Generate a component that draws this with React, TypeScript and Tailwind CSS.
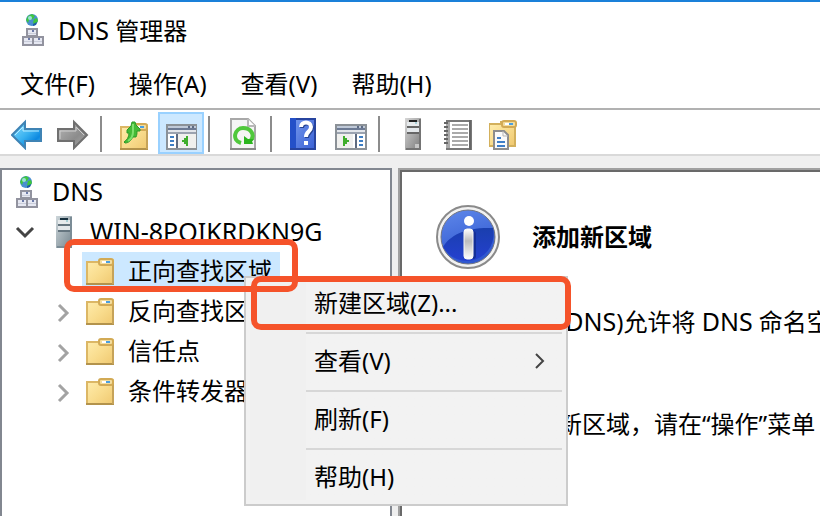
import type { ReactNode } from "react";

function Gradients() {
  return (
    <svg className="absolute h-0 w-0" aria-hidden="true">
      <defs>
        <linearGradient id="folder" x1="0" y1="0" x2="1" y2="1">
          <stop offset="0" stopColor="#ffeeb0" />
          <stop offset="0.5" stopColor="#f9dd8f" />
          <stop offset="1" stopColor="#efc76e" />
        </linearGradient>
        <linearGradient id="blueArrow" x1="0" y1="0" x2="1" y2="1">
          <stop offset="0" stopColor="#8fe0ff" />
          <stop offset="0.5" stopColor="#38b1f0" />
          <stop offset="0.75" stopColor="#0b88e0" />
          <stop offset="1" stopColor="#5ac8f8" />
        </linearGradient>
        <linearGradient id="grayArrow" x1="0" y1="0" x2="1" y2="1">
          <stop offset="0" stopColor="#b8b8b8" />
          <stop offset="0.6" stopColor="#8c8c8c" />
          <stop offset="1" stopColor="#a8a8a8" />
        </linearGradient>
        <linearGradient id="tower" x1="0" y1="0" x2="1" y2="1">
          <stop offset="0" stopColor="#d6d6d6" />
          <stop offset="1" stopColor="#7c7c7c" />
        </linearGradient>
        <linearGradient id="blueTower" x1="0" y1="0" x2="1" y2="1">
          <stop offset="0" stopColor="#cdd6da" />
          <stop offset="1" stopColor="#75858e" />
        </linearGradient>
        <linearGradient id="help" x1="0" y1="0" x2="1" y2="1">
          <stop offset="0" stopColor="#6f93ea" />
          <stop offset="1" stopColor="#3c63d6" />
        </linearGradient>
        <linearGradient id="infoTop" x1="0" y1="0" x2="0.3" y2="1">
          <stop offset="0" stopColor="#5f88ea" />
          <stop offset="1" stopColor="#2f57cf" />
        </linearGradient>
        <linearGradient id="infoBottom" x1="0" y1="0" x2="0" y2="1">
          <stop offset="0" stopColor="#1a3fae" />
          <stop offset="1" stopColor="#2440d0" />
        </linearGradient>
        <linearGradient id="infoStem" x1="0" y1="0" x2="0" y2="1">
          <stop offset="0" stopColor="#ffffff" />
          <stop offset="0.4" stopColor="#bdbdbd" />
          <stop offset="1" stopColor="#ffffff" />
        </linearGradient>
      </defs>
    </svg>
  );
}

function Icon({ children }: { children: ReactNode }) {
  return (
    <svg viewBox="0 0 32 32" className="block h-8 w-8 shrink-0" aria-hidden="true">
      {children}
    </svg>
  );
}

function DnsIcon() {
  return (
    <Icon>
      <circle cx="16" cy="6" r="6" fill="#4a8fd0" />
      <path d="M12 2l4-2 3 2-2 3-4 1-1 3-2-3zM18 5l3-1 1 3-3 4-2-2z" fill="#3fc63f" />
      <circle cx="14" cy="4" r="2" fill="#9be0d8" />
      <path d="M17 10l4-2-1 3-3 1z" fill="#1d5aa8" />
      {[[10, 14, 12, 9], [6, 22, 12, 10], [16, 22, 12, 10]].map(([x, y, w, h]) => (
        <g key={`${x}-${y}`}>
          <rect x={x + 1} y={y + 1} width={w - 2} height={h - 2} fill="#e6e8f2" stroke="#92939f" strokeWidth="2" />
          <rect x={x + 6} y={y + 2} width="2" height="2" fill="#6b7aa8" />
          <rect x={x + 2} y={y + 5} width={w - 4} height="1" fill="#c9cdda" />
        </g>
      ))}
    </Icon>
  );
}

function FolderShape() {
  return (
    <>
      <path d="M0 6h12l2-2h14v26H0z" fill="url(#folder)" />
      <path d="M1 29V7h12" fill="none" stroke="#dcb765" strokeWidth="2" />
      <path d="M0 29h28" stroke="#b3934c" strokeWidth="2" />
      <path d="M27 7v22" stroke="#c6a359" strokeWidth="2" />
      <rect x="13" y="4" width="14" height="6" rx="2" fill="#f3dc9d" stroke="#d2aa55" strokeWidth="2" />
      <rect x="16" y="6" width="4" height="2" fill="#fff" />
      <rect x="20" y="6" width="4" height="2" fill="#4a9fe0" />
    </>
  );
}

function FolderIcon() {
  return (
    <Icon>
      <g transform="translate(0 -1)">
        <FolderShape />
      </g>
    </Icon>
  );
}

function TowerIcon({ blue = false }: { blue?: boolean }) {
  return (
    <Icon>
      <rect x="8" y="0" width="16" height="32" fill={blue ? "url(#blueTower)" : "url(#tower)"} />
      <path d="M23 1v30H9" fill="none" stroke={blue ? "#7b8c96" : "#747474"} strokeWidth="2" />
      <rect x="12" y="2" width="8" height="2" fill={blue ? "#17303e" : "#222"} />
      <rect x="10" y="4" width="12" height="4" fill="#e6eaec" />
      <rect x="18" y="4" width="2" height="2" fill="#a9cfd6" />
      <rect x="10" y="8" width="12" height="2" fill={blue ? "#65757f" : "#666"} />
      <rect x="10" y="10" width="12" height="4" fill="#e3e7ea" />
      <rect x="10" y="14" width="12" height="2" fill={blue ? "#65757f" : "#666"} />
      {!blue && <rect x="18" y="26" width="4" height="4" fill="#c6c6c6" />}
    </Icon>
  );
}

function BackIcon() {
  return (
    <Icon>
      <path d="M1 17L14 4v7h16v12H14v7z" fill="url(#blueArrow)" stroke="#3f83b4" strokeWidth="2" />
      <path d="M4 17l8-8v4h16" fill="none" stroke="#b9ecff" strokeWidth="1" />
    </Icon>
  );
}

function ForwardIcon() {
  return (
    <Icon>
      <path d="M30 17L17 4v7H1v12h16v7z" fill="url(#grayArrow)" stroke="#707070" strokeWidth="2" />
      <path d="M3 21v-8h16V9l8 8" fill="none" stroke="#cfcfcf" strokeWidth="1" />
    </Icon>
  );
}

function FolderUpIcon() {
  return (
    <Icon>
      <g transform="translate(1 2)">
        <FolderShape />
        <path d="M4 22c3-2 5-5 5-9H7v-3l4-4 1-4h3l1 3 4 4v2h-3c0 2 0 4-1 6h-3c-2 3-4 6-8 6z" fill="#43bb36" stroke="#2d9a28" strokeWidth="1" />
        <path d="M13 4v8c0 3-2 7-5 9" fill="none" stroke="#7ee06c" strokeWidth="2" />
      </g>
    </Icon>
  );
}

function PaneIcon({ mirrored = false }: { mirrored?: boolean }) {
  return (
    <Icon>
      <g transform={mirrored ? undefined : "translate(1 0)"}>
        <rect x="1" y="7" width="30" height="24" fill="#fff" stroke="#8b9197" strokeWidth="2" />
        <rect x="2" y="8" width="28" height="2" fill="#bfc9d8" />
        <rect x="22" y="8" width="2" height="2" fill="#5d6b85" />
        <rect x="26" y="8" width="2" height="2" fill="#5d6b85" />
        <rect x="2" y="10" width="28" height="2" fill="#6c7a94" />
        <rect x="2" y="12" width="28" height="2" fill="#e3e6eb" />
        <rect x="2" y="14" width="28" height="2" fill="#9ba3b0" />
        {mirrored ? (
          <>
            <rect x="2" y="16" width="16" height="14" fill="#f0f0ee" />
            <rect x="20" y="16" width="2" height="14" fill="#5f6b80" />
            <path d="M8 18h2v2h2v2h2v2h-2v2h-2v2H8z" fill="#3fae2c" />
            <path d="M24 19h4M24 23h4M24 27h4" stroke="#3f7fc4" strokeWidth="2" />
          </>
        ) : (
          <>
            <rect x="12" y="16" width="18" height="14" fill="#f0f0ee" />
            <rect x="10" y="16" width="2" height="14" fill="#5f6b80" />
            <path d="M22 18h-2v2h-2v2h-2v2h2v2h2v2h2z" fill="#3fae2c" />
            <path d="M4 19h4M4 23h4M4 27h4" stroke="#3f7fc4" strokeWidth="2" />
          </>
        )}
      </g>
    </Icon>
  );
}

function RefreshIcon() {
  return (
    <Icon>
      <path d="M4 1h17l7 7v23H4z" fill="#f5f5f5" stroke="#a8a8a8" strokeWidth="2" />
      <path d="M21 1v7h7" fill="#fff" stroke="#b8b8b8" strokeWidth="2" />
      <path d="M3 31h26" stroke="#888" strokeWidth="2" />
      <path d="M14 25C4 22 8 10 16 10s12 7 8 12" fill="none" stroke="#50c83c" strokeWidth="4" />
      <path d="M17 26v-8l4 3h6l-2 2 1 3z" fill="#2cb51f" />
    </Icon>
  );
}

function HelpIcon() {
  return (
    <Icon>
      <rect x="1" y="0" width="26" height="32" fill="#27449f" />
      <rect x="1" y="0" width="6" height="30" fill="#2450c8" />
      <rect x="7" y="2" width="18" height="28" fill="url(#help)" />
      <path d="M13 10c0-6 10-6 10 0 0 5-5 4-5 10" fill="none" stroke="#254292" strokeWidth="4" />
      <path d="M12 9c0-6 10-6 10 0 0 5-5 4-5 10" fill="none" stroke="#fff" strokeWidth="4" />
      <rect x="15" y="23" width="4" height="4" fill="#fff" />
    </Icon>
  );
}

function NotebookIcon() {
  return (
    <Icon>
      <g transform="translate(-1 0)">
        <rect x="5" y="3" width="24" height="28" fill="#fff" stroke="#787878" strokeWidth="2" />
        <rect x="4" y="4" width="4" height="26" fill="#a9a9a9" />
        <path d="M28 2v30" stroke="#666" strokeWidth="2" />
        <path d="M10 7h16M10 11h16M10 15h16M10 19h16M10 23h16M10 27h16" stroke="#aaa" strokeWidth="2" />
        <path d="M2 5h4M2 9h4M2 13h4M2 17h4M2 21h4M2 25h4" stroke="#666" strokeWidth="2" />
      </g>
    </Icon>
  );
}

function FolderDocIcon() {
  return (
    <Icon>
      <path d="M0 6h12V4h14v24H0z" fill="url(#folder)" stroke="#d3b05c" strokeWidth="2" />
      <rect x="13" y="3" width="14" height="6" rx="2" fill="#f3dc9d" stroke="#d2aa55" strokeWidth="2" />
      <path d="M16 6h4" stroke="#fff" strokeWidth="2" />
      <path d="M20 6h4" stroke="#4a9fe0" strokeWidth="2" />
      <path d="M5 13h10l4 4v14H5z" fill="#fafafa" stroke="#8d8d8d" strokeWidth="2" />
      <path d="M14 13v5h5" fill="none" stroke="#b5b5b5" strokeWidth="1" />
      <path d="M8 20h4M8 24h8M8 28h8" stroke="#3f7fc8" strokeWidth="2" />
    </Icon>
  );
}

function InfoIcon() {
  return (
    <svg viewBox="0 0 64 64" className="h-16 w-16 shrink-0" aria-hidden="true">
      <circle cx="32" cy="32" r="31" fill="#f2f2f2" stroke="#8a8a8a" strokeWidth="2" />
      <circle cx="32" cy="32" r="27" fill="url(#infoTop)" stroke="#707480" strokeWidth="1" />
      <path d="M7 42C14 30 30 22 57 23a27 27 0 0 1-50 19z" fill="url(#infoBottom)" />
      <rect x="30" y="26" width="10" height="28" rx="3" fill="#142f98" />
      <circle cx="33" cy="16" r="5" fill="#fff" />
      <rect x="28" y="24" width="9" height="30" rx="3" fill="url(#infoStem)" stroke="#f7f7f7" strokeWidth="1" />
    </svg>
  );
}

function ToolButton({ label, active = false, children }: { label: string; active?: boolean; children: ReactNode }) {
  return (
    <button
      type="button"
      aria-label={label}
      aria-pressed={active}
      className={`flex h-[42px] w-[46px] items-start justify-center border-2 pt-1 ${
        active ? "border-[#99d1ff] bg-[#cce8ff]" : "border-transparent"
      }`}
    >
      {children}
    </button>
  );
}

function Separator() {
  return <div className="mt-1 mr-2.5 ml-1 h-9 w-0.5 bg-[#8c8c8c]" />;
}

function Expander({ open = false, label }: { open?: boolean; label: string }) {
  return (
    <button type="button" aria-label={label} aria-expanded={open} className="mr-1.5 flex h-6 w-6 items-center justify-center">
      <svg viewBox="0 0 24 24" className="h-6 w-6" fill="none" strokeWidth="3" aria-hidden="true">
        {open ? <path d="M3 8l8 8 8-8" stroke="#444" /> : <path d="M7 5l8 8-8 8" stroke="#a3a3a3" />}
      </svg>
    </button>
  );
}

function Latin({ children }: { children: string }) {
  return <span className="text-[25px]">{children}</span>;
}

const zones = [
  { name: "正向查找区域", selected: true },
  { name: "反向查找区域", selected: false },
  { name: "信任点", selected: false },
  { name: "条件转发器", selected: false },
];

const menuItems = [
  { text: "新建区域(Z)...", submenu: false, marked: true, box: "h-[50px] pb-2" },
  { text: "查看(V)", submenu: true, marked: false, box: "h-14 pb-0.5" },
  { text: "刷新(F)", submenu: false, marked: false, box: "h-14 pb-0.5" },
  { text: "帮助(H)", submenu: false, marked: false, box: "h-[50px] pt-1" },
];

function Tree() {
  return (
    <ul className="pt-0.5">
      <li className="flex h-10 items-center gap-2.5 pl-2">
        <DnsIcon />
        <span className="pb-0.5"><Latin>DNS</Latin></span>
      </li>
      <li className="flex h-10 items-center pl-3">
        <Expander open label="WIN-8POIKRDKN9G" />
        <span className="flex items-center gap-2.5 pl-1">
          <TowerIcon blue />
          <span className="pb-0.5"><Latin>WIN-8POIKRDKN9G</Latin></span>
        </span>
      </li>
      {zones.map((zone) => (
        <li key={zone.name} className="flex h-10 items-center pl-[50px]">
          {zone.selected ? <span className="mr-1.5 w-6" /> : <Expander label={zone.name} />}
          <span className={`flex h-10 items-center gap-2.5 pr-2 pl-1 ${zone.selected ? "bg-[#cce8ff]" : ""}`}>
            <FolderIcon />
            <span className="pb-0.5">{zone.name}</span>
          </span>
        </li>
      ))}
    </ul>
  );
}

function ContextMenu() {
  return (
    <div role="menu" className="absolute top-[274px] left-[244px] w-[324px] border-2 border-[#ccc] bg-[#f2f2f2]">
      <div className="m-1 bg-linear-to-r from-[#f0f0f0] from-[56px] to-[#f2f2f2] to-[56px]">
        {menuItems.map((item, index) => (
          <div key={item.text} className="relative">
            {index > 0 && <div className="ml-14 h-0.5 bg-[#d7d7d7]" />}
            <button
              type="button"
              role="menuitem"
              className={`flex w-full items-center justify-between pr-4 pl-16 leading-8 ${item.box}`}
            >
              <span>{item.text}</span>
              {item.submenu && (
                <svg viewBox="0 0 12 18" className="h-[18px] w-3" fill="none" stroke="#444" strokeWidth="2" aria-hidden="true">
                  <path d="M2 2l7 7-7 7" />
                </svg>
              )}
            </button>
            {item.marked && (
              <div className="absolute -top-1.5 left-px h-[54px] w-80 rounded-[10px] border-6 border-[#f5532a]" />
            )}
          </div>
        ))}
      </div>
    </div>
  );
}

export default function App() {
  return (
    <div className="relative flex h-screen flex-col overflow-hidden border-t-2 border-[#1a80d9] bg-white font-['Noto_Sans','Noto_Sans_CJK_SC',sans-serif] text-2xl leading-8 whitespace-nowrap text-black">
      <Gradients />
      <header className="flex h-14 items-center gap-2.5 pl-4">
        <DnsIcon />
        <h1><Latin>DNS</Latin> 管理器</h1>
      </header>
      <nav className="flex h-[50px] items-center gap-[34px] pt-0.5 pl-5">
        <button type="button">文件(F)</button>
        <button type="button">操作(A)</button>
        <button type="button">查看(V)</button>
        <button type="button">帮助(H)</button>
      </nav>
      <div className="flex h-12 border-t-2 border-b-2 border-t-[#b1b1b1] border-b-[#d9d9d9] pt-0.5 pl-1">
        <ToolButton label="后退"><BackIcon /></ToolButton>
        <ToolButton label="前进"><ForwardIcon /></ToolButton>
        <Separator />
        <ToolButton label="上一级"><FolderUpIcon /></ToolButton>
        <ToolButton label="控制台树" active><PaneIcon /></ToolButton>
        <Separator />
        <ToolButton label="刷新"><RefreshIcon /></ToolButton>
        <Separator />
        <ToolButton label="帮助"><HelpIcon /></ToolButton>
        <ToolButton label="操作窗格"><PaneIcon mirrored /></ToolButton>
        <Separator />
        <ToolButton label="新建服务器"><TowerIcon /></ToolButton>
        <ToolButton label="新建记录"><NotebookIcon /></ToolButton>
        <ToolButton label="新建区域"><FolderDocIcon /></ToolButton>
      </div>
      <div className="flex min-h-0 flex-1 gap-1.5 bg-[#efefef] pt-3">
        <aside className="w-[392px] shrink-0 border-2 border-b-0 border-[#828790] bg-white">
          <Tree />
        </aside>
        <main className="min-w-0 flex-1 overflow-hidden border-t-2 border-l-2 border-[#a0a0a0]">
          <div className="h-full border-t-2 border-l-2 border-[#696969] bg-white">
            <div className="flex items-center gap-8 pt-[33px] pl-[34px]">
              <InfoIcon />
              <h2 className="font-bold">添加新区域</h2>
            </div>
            <p className="mt-9 pl-[156px]">(<Latin>DNS</Latin>)允许将 <Latin>DNS</Latin> 命名空</p>
            <p className="mt-[70px] pl-[156px]">新区域，请在“操作”菜单</p>
          </div>
        </main>
      </div>
      <ContextMenu />
      <div className="absolute top-[237px] left-16 h-[53px] w-[234px] rounded-[10px] border-6 border-[#f5532a]" />
    </div>
  );
}
